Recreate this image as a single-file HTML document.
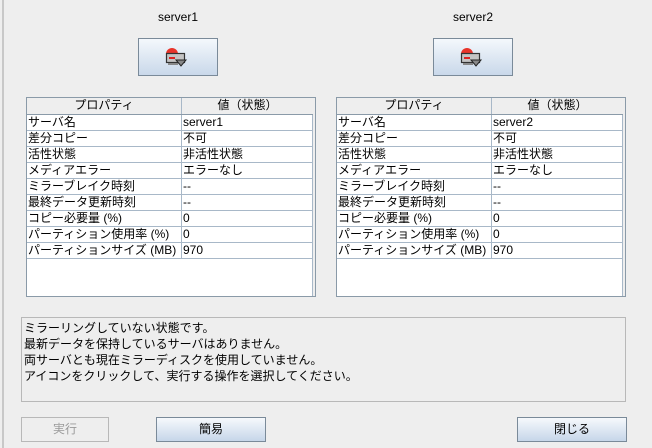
<!DOCTYPE html>
<html><head><meta charset="utf-8"><style>
*{margin:0;padding:0;box-sizing:border-box}
body{width:652px;height:448px;background:#eeeeee;position:relative;overflow:hidden;font-family:"Liberation Sans","Noto Sans CJK JP",sans-serif;font-size:12px;color:#000}
.abs{position:absolute}
.vl{left:2px;top:0;width:2px;height:448px;background:#c8c8c8}
.lbl{top:10px;width:120px;text-align:center;font-size:12px}
.sbtn{top:38px;width:80px;height:38px;border:1px solid #7a8a99;background:linear-gradient(#f4f8fc,#c9d8ea)}
.tbl{top:97px;width:290px;height:200px;border:1px solid #8a9aa8;background:#fff}
.row{position:absolute;left:0;width:286px;height:16px;border-bottom:1px solid #a8b8c8;line-height:15px;white-space:nowrap}
.row span{position:absolute;top:0;height:16px;padding-left:1px}
.c1{left:0;width:155px;border-right:1px solid #a8b8c8}
.c2{left:155px;width:131px}
.hdr{background:#eeeeee;border-bottom:1px solid #8a9aa8}
.hdr span{text-align:center;padding:0}
.sb{position:absolute;right:0;top:0;width:3px;height:100%;border-left:1px solid #a8b8c8;background:#eee}
.msg{left:21px;top:317px;width:605px;height:85px;border:1px solid #b8b8b8;background:#eeeeee;padding:2px 2px;line-height:16px;font-size:12px}
.btn{top:417px;height:25px;border:1px solid #7a8a99;background:linear-gradient(#f6f9fc,#c6d6e9);text-align:center;line-height:23px}
</style></head><body>
<div class="abs vl"></div>
<div class="abs lbl" style="left:118px">server1</div>
<div class="abs lbl" style="left:413px">server2</div>

<div class="abs sbtn" style="left:138px">
<svg width="80" height="38" viewBox="0 0 80 38" style="position:absolute;left:-1px;top:-1px">
<path d="M28 16 a6 6 0 0 1 12 0 z" fill="#e8342a"/>
<rect x="28.5" y="15.5" width="18" height="9" fill="#c4c4c4" stroke="#333" stroke-width="1.2"/>
<rect x="31" y="19" width="6" height="2" fill="#d22"/>
<path d="M38 22 l10 0 l-5 6 z" fill="#888" stroke="#222" stroke-width="1"/>
<rect x="30" y="25" width="10" height="2" fill="#888"/>
</svg></div>
<div class="abs sbtn" style="left:433px">
<svg width="80" height="38" viewBox="0 0 80 38" style="position:absolute;left:-1px;top:-1px">
<path d="M28 16 a6 6 0 0 1 12 0 z" fill="#e8342a"/>
<rect x="28.5" y="15.5" width="18" height="9" fill="#c4c4c4" stroke="#333" stroke-width="1.2"/>
<rect x="31" y="19" width="6" height="2" fill="#d22"/>
<path d="M38 22 l10 0 l-5 6 z" fill="#888" stroke="#222" stroke-width="1"/>
<rect x="30" y="25" width="10" height="2" fill="#888"/>
</svg></div>

<div class="abs tbl" style="left:26px">
<div class="sb"></div>
<div class="row hdr" style="top:0;height:17px"><span class="c1">プロパティ</span><span class="c2">値（状態）</span></div>
<div class="row" style="top:17px"><span class="c1">サーバ名</span><span class="c2">server1</span></div>
<div class="row" style="top:33px"><span class="c1">差分コピー</span><span class="c2">不可</span></div>
<div class="row" style="top:49px"><span class="c1">活性状態</span><span class="c2">非活性状態</span></div>
<div class="row" style="top:65px"><span class="c1">メディアエラー</span><span class="c2">エラーなし</span></div>
<div class="row" style="top:81px"><span class="c1">ミラーブレイク時刻</span><span class="c2">--</span></div>
<div class="row" style="top:97px"><span class="c1">最終データ更新時刻</span><span class="c2">--</span></div>
<div class="row" style="top:113px"><span class="c1">コピー必要量 (%)</span><span class="c2">0</span></div>
<div class="row" style="top:129px"><span class="c1">パーティション使用率 (%)</span><span class="c2">0</span></div>
<div class="row" style="top:145px"><span class="c1">パーティションサイズ (MB)</span><span class="c2">970</span></div>
</div>

<div class="abs tbl" style="left:336px">
<div class="sb"></div>
<div class="row hdr" style="top:0;height:17px"><span class="c1">プロパティ</span><span class="c2">値（状態）</span></div>
<div class="row" style="top:17px"><span class="c1">サーバ名</span><span class="c2">server2</span></div>
<div class="row" style="top:33px"><span class="c1">差分コピー</span><span class="c2">不可</span></div>
<div class="row" style="top:49px"><span class="c1">活性状態</span><span class="c2">非活性状態</span></div>
<div class="row" style="top:65px"><span class="c1">メディアエラー</span><span class="c2">エラーなし</span></div>
<div class="row" style="top:81px"><span class="c1">ミラーブレイク時刻</span><span class="c2">--</span></div>
<div class="row" style="top:97px"><span class="c1">最終データ更新時刻</span><span class="c2">--</span></div>
<div class="row" style="top:113px"><span class="c1">コピー必要量 (%)</span><span class="c2">0</span></div>
<div class="row" style="top:129px"><span class="c1">パーティション使用率 (%)</span><span class="c2">0</span></div>
<div class="row" style="top:145px"><span class="c1">パーティションサイズ (MB)</span><span class="c2">970</span></div>
</div>

<div class="abs msg">ミラーリングしていない状態です。<br>最新データを保持しているサーバはありません。<br>両サーバとも現在ミラーディスクを使用していません。<br>アイコンをクリックして、実行する操作を選択してください。</div>

<div class="abs btn" style="left:21px;width:88px;background:#eeeeee;border-color:#b8b8b8;color:#999">実行</div>
<div class="abs btn" style="left:156px;width:110px">簡易</div>
<div class="abs btn" style="left:517px;width:110px">閉じる</div>
</body></html>
